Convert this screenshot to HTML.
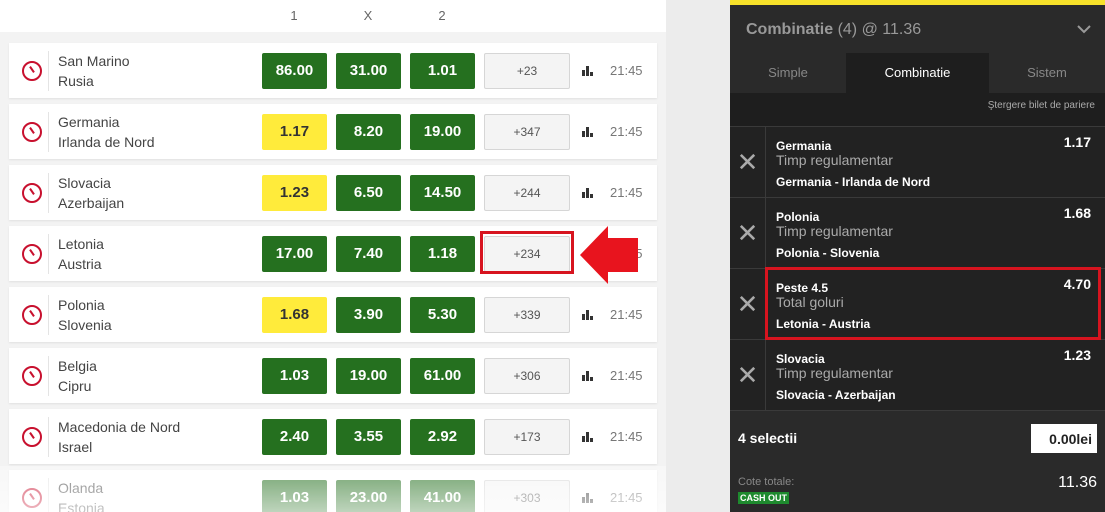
<!DOCTYPE html>
<html><head><meta charset="utf-8"><style>
*{margin:0;padding:0;box-sizing:border-box}
html,body{width:1105px;height:512px;overflow:hidden}
body{background:#ececec;font-family:"Liberation Sans",sans-serif;position:relative}
#wrap{position:absolute;left:0;top:0;width:1105px;height:512px;overflow:hidden}
#left{position:absolute;left:0;top:0;width:666px;height:512px;background:#f3f3f3}
#hdr{position:absolute;left:0;top:0;width:666px;height:32px;background:#fff}
#hdr span{position:absolute;top:8px;font-size:13px;color:#666;width:20px;text-align:center}
.row{position:absolute;left:9px;width:648px;height:55px;background:#fff;box-shadow:0 1px 2px rgba(0,0,0,.08)}
.ic{position:absolute;left:13px;top:18px;width:20px;height:20px;border:2px solid #c8102e;border-radius:50%}
.ic:after{content:"";position:absolute;left:7px;top:3px;width:2px;height:7px;background:#c8102e;transform:rotate(-35deg)}
.sep{position:absolute;left:39px;top:8px;width:1px;height:40px;background:#e4e4e4}
.tm{position:absolute;left:49px;top:8px;font-size:14px;color:#444;line-height:20px}
.o{position:absolute;top:10px;width:65px;height:36px;background:#25701f;color:#fff;font-weight:bold;font-size:15px;text-align:center;line-height:36px;border-radius:2px}
.o.y{background:#ffeb3b;color:#333}
.more{position:absolute;left:475px;top:10px;width:86px;height:36px;background:#f4f4f4;border:1px solid #d6d6d6;font-size:12px;color:#555;text-align:center;line-height:34px;border-radius:2px}
.bar{position:absolute;left:573px;top:23px;width:12px;height:10px}
.bar i{position:absolute;bottom:0;width:3px;background:#333}
.t{position:absolute;left:601px;top:20px;font-size:13px;color:#777}
#fade{position:absolute;left:0;top:466px;width:666px;height:46px;background:linear-gradient(rgba(255,255,255,.35),rgba(255,255,255,.7))}
#right{position:absolute;left:730px;top:0;width:375px;height:512px;background:#2a2a2a;color:#fff}
.sel{position:absolute;left:0;width:375px;height:71px;border-top:1px solid #3a3a3a;background:#222}
.x{position:absolute;left:0;top:0;width:36px;height:71px;border-right:1px solid #3a3a3a;color:#aaa;font-size:26px;text-align:center;line-height:71px}
.s1{position:absolute;left:46px;top:12px;font-size:12px;font-weight:bold}
.s2{position:absolute;left:46px;top:25px;font-size:14px;color:#aaa}
.s3{position:absolute;left:46px;top:48px;font-size:12px;font-weight:bold}
.od{position:absolute;right:14px;top:7px;font-size:14px;font-weight:bold}
</style></head><body><div id="wrap">
<div id="left">
<div id="hdr"><span style="left:284px">1</span><span style="left:358px">X</span><span style="left:432px">2</span></div>
</div>
<div class="row" style="top:43px"><div class="ic"></div><div class="sep"></div><div class="tm">San Marino<br>Rusia</div><div class="o" style="left:253px">86.00</div><div class="o" style="left:327px">31.00</div><div class="o" style="left:401px">1.01</div><div class="more">+23</div><div class="bar"><i style="left:0;height:6px"></i><i style="left:4px;height:10px"></i><i style="left:8px;height:4px"></i></div><div class="t">21:45</div></div>
<div class="row" style="top:104px"><div class="ic"></div><div class="sep"></div><div class="tm">Germania<br>Irlanda de Nord</div><div class="o y" style="left:253px">1.17</div><div class="o" style="left:327px">8.20</div><div class="o" style="left:401px">19.00</div><div class="more">+347</div><div class="bar"><i style="left:0;height:6px"></i><i style="left:4px;height:10px"></i><i style="left:8px;height:4px"></i></div><div class="t">21:45</div></div>
<div class="row" style="top:165px"><div class="ic"></div><div class="sep"></div><div class="tm">Slovacia<br>Azerbaijan</div><div class="o y" style="left:253px">1.23</div><div class="o" style="left:327px">6.50</div><div class="o" style="left:401px">14.50</div><div class="more">+244</div><div class="bar"><i style="left:0;height:6px"></i><i style="left:4px;height:10px"></i><i style="left:8px;height:4px"></i></div><div class="t">21:45</div></div>
<div class="row" style="top:226px"><div class="ic"></div><div class="sep"></div><div class="tm">Letonia<br>Austria</div><div class="o" style="left:253px">17.00</div><div class="o" style="left:327px">7.40</div><div class="o" style="left:401px">1.18</div><div class="more">+234</div><div class="t">21:45</div></div>
<div class="row" style="top:287px"><div class="ic"></div><div class="sep"></div><div class="tm">Polonia<br>Slovenia</div><div class="o y" style="left:253px">1.68</div><div class="o" style="left:327px">3.90</div><div class="o" style="left:401px">5.30</div><div class="more">+339</div><div class="bar"><i style="left:0;height:6px"></i><i style="left:4px;height:10px"></i><i style="left:8px;height:4px"></i></div><div class="t">21:45</div></div>
<div class="row" style="top:348px"><div class="ic"></div><div class="sep"></div><div class="tm">Belgia<br>Cipru</div><div class="o" style="left:253px">1.03</div><div class="o" style="left:327px">19.00</div><div class="o" style="left:401px">61.00</div><div class="more">+306</div><div class="bar"><i style="left:0;height:6px"></i><i style="left:4px;height:10px"></i><i style="left:8px;height:4px"></i></div><div class="t">21:45</div></div>
<div class="row" style="top:409px"><div class="ic"></div><div class="sep"></div><div class="tm">Macedonia de Nord<br>Israel</div><div class="o" style="left:253px">2.40</div><div class="o" style="left:327px">3.55</div><div class="o" style="left:401px">2.92</div><div class="more">+173</div><div class="bar"><i style="left:0;height:6px"></i><i style="left:4px;height:10px"></i><i style="left:8px;height:4px"></i></div><div class="t">21:45</div></div>
<div class="row" style="top:470px"><div class="ic"></div><div class="sep"></div><div class="tm">Olanda<br>Estonia</div><div class="o" style="left:253px">1.03</div><div class="o" style="left:327px">23.00</div><div class="o" style="left:401px">41.00</div><div class="more">+303</div><div class="bar"><i style="left:0;height:6px"></i><i style="left:4px;height:10px"></i><i style="left:8px;height:4px"></i></div><div class="t">21:45</div></div>
<div id="fade"></div>
<div style="position:absolute;left:480px;top:231px;width:94px;height:43px;border:3px solid #d7141f"></div>
<svg style="position:absolute;left:580px;top:224px" width="58" height="62"><polygon points="0,31 28,2 28,14 58,14 58,48 28,48 28,60" fill="#e8141e"/></svg>
<div id="right">
<div style="position:absolute;left:0;top:0;width:375px;height:5px;background:#f7e12a"></div>
<div style="position:absolute;left:16px;top:21px;font-size:16px;color:#999"><b>Combinatie</b> (4) @ 11.36</div>
<svg style="position:absolute;left:347px;top:24px" width="14" height="10"><polyline points="1,2 7,8 13,2" fill="none" stroke="#999" stroke-width="2"/></svg>
<div style="position:absolute;left:0;top:53px;width:375px;height:40px;font-size:13px;color:#888">
<div style="position:absolute;left:0;width:116px;text-align:center;top:12px">Simple</div>
<div style="position:absolute;left:116px;width:143px;height:40px;background:#1e1e1e;color:#fff;text-align:center;padding-top:12px">Combinatie</div>
<div style="position:absolute;left:259px;width:116px;text-align:center;top:12px">Sistem</div></div>
<div style="position:absolute;left:0;top:93px;width:375px;height:33px;background:#1e1e1e"><div style="position:absolute;right:10px;top:7px;font-size:10px;color:#aaa">Ştergere bilet de pariere</div></div>
<div class="sel" style="top:126px"><div class="x">✕</div><div class="s1">Germania</div><div class="s2">Timp regulamentar</div><div class="s3">Germania - Irlanda de Nord</div><div class="od">1.17</div></div>
<div class="sel" style="top:197px"><div class="x">✕</div><div class="s1">Polonia</div><div class="s2">Timp regulamentar</div><div class="s3">Polonia - Slovenia</div><div class="od">1.68</div></div>
<div class="sel" style="top:268px"><div class="x">✕</div><div class="s1">Peste 4.5</div><div class="s2">Total goluri</div><div class="s3">Letonia - Austria</div><div class="od">4.70</div></div>
<div class="sel" style="top:339px;height:72px;border-bottom:1px solid #3a3a3a"><div class="x">✕</div><div class="s1">Slovacia</div><div class="s2">Timp regulamentar</div><div class="s3">Slovacia - Azerbaijan</div><div class="od">1.23</div></div>
<div style="position:absolute;left:35px;top:267px;width:336px;height:73px;border:3px solid #d7141f"></div>
<div style="position:absolute;left:8px;top:430px;font-size:14px;font-weight:bold">4 selectii</div>
<div style="position:absolute;left:301px;top:424px;width:66px;height:29px;background:#fff;color:#222;font-size:14px;font-weight:bold;text-align:right;padding:7px 5px 0 0">0.00lei</div>
<div style="position:absolute;left:8px;top:476px;font-size:11px;color:#888">Cote totale:</div>
<div style="position:absolute;right:8px;top:474px;font-size:16px">11.36</div>
<div style="position:absolute;left:8px;top:492px;background:#1e8a2e;font-size:9px;font-weight:bold;padding:1px 2px">CASH OUT</div>
</div>
</div></body></html>
